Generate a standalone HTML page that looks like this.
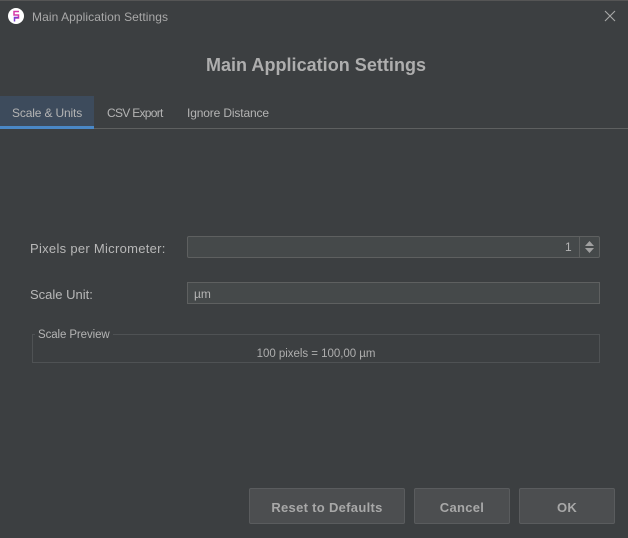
<!DOCTYPE html>
<html><head><meta charset="utf-8"><style>
html,body{margin:0;padding:0;background:#3c3f41}
body{width:628px;height:538px;position:relative;overflow:hidden;font-family:"Liberation Sans",sans-serif;color:#b4b4b4;font-size:12px}
.a{position:absolute;white-space:nowrap}
.b{position:absolute;box-sizing:border-box;border:1px solid #5e6060;background:#45494a}
.btn{position:absolute;top:488px;height:36px;box-sizing:border-box;background:#4c4e50;border:1px solid #5a5c5e;border-radius:2px;text-align:center;line-height:37px;font-weight:bold;font-size:13px;color:#a8a8a8;letter-spacing:.3px}
</style></head><body>
<div class="a" style="left:0;top:0;width:628px;height:1px;background:#555"></div>
<svg class="a" style="left:8px;top:8px" width="16" height="16" viewBox="0 0 16 16"><circle cx="8" cy="8" r="8" fill="#fff"/><path d="M11 3.500H6V7H10.500V10H6" fill="none" stroke="#d63aa8" stroke-width="1.500"/><path d="M6.500 13.500V9.500H10.500" fill="none" stroke="#7a3fd0" stroke-width="1.500"/></svg>
<div class="a" style="left:32px;top:10px;line-height:14px;color:#a9a9a9;letter-spacing:.08px">Main Application Settings</div>
<svg class="a" style="left:604px;top:10px" width="12" height="12" viewBox="0 0 12 12"><path d="M1 1L11 11M11 1L1 11" stroke="#a8a8a8" stroke-width="1.100"/></svg>
<div class="a" style="left:0;width:632px;top:54px;text-align:center;font-size:18px;line-height:22px;font-weight:bold;color:#aeaeae;letter-spacing:.03px">Main Application Settings</div>
<div class="a" style="left:0;top:96px;width:94px;height:30px;background:#3d4b5c"></div>
<div class="a" style="left:0;top:126px;width:94px;height:3px;background:#4a88c7"></div>
<div class="a" style="left:94px;top:128px;width:534px;height:1px;background:#5e6060"></div>
<div class="a" style="left:12px;top:106px;line-height:14px;color:#b4b4b4;letter-spacing:-.15px">Scale &amp; Units</div>
<div class="a" style="left:107px;top:106px;line-height:14px;letter-spacing:-.7px">CSV Export</div>
<div class="a" style="left:187px;top:106px;line-height:14px;letter-spacing:-.14px">Ignore Distance</div>
<div class="a" style="left:30px;top:241px;line-height:16px;font-size:13px;color:#b8b8b8;letter-spacing:.29px">Pixels per Micrometer:</div>
<div class="b" style="left:187px;top:236px;width:413px;height:22px;border-radius:2px"></div>
<div class="a" style="left:579px;top:237px;width:1px;height:20px;background:#5e6060"></div>
<div class="a" style="left:565px;top:240px;line-height:15px;color:#b4b4b4">1</div>
<svg class="a" style="left:585px;top:241px" width="9" height="12" viewBox="0 0 9 12"><path d="M4.500 0L9 5H0Z M0 7H9L4.500 12Z" fill="#a0a0a0"/></svg>
<div class="a" style="left:30px;top:287px;line-height:16px;font-size:13px;color:#b8b8b8">Scale Unit:</div>
<div class="b" style="left:187px;top:282px;width:413px;height:22px"></div>
<div class="a" style="left:194px;top:287px;line-height:15px">µm</div>
<div class="a" style="left:32px;top:334px;width:568px;height:29px;box-sizing:border-box;border:1px solid #4f5254"></div>
<div class="a" style="left:35px;top:328px;padding:0 3px;background:#3c3f41;line-height:14px;color:#b4b4b4;font-size:11.500px;letter-spacing:-.1px">Scale Preview</div>
<div class="a" style="left:32px;width:568px;top:347px;text-align:center;line-height:14px;color:#aeaeae;font-size:11.500px;letter-spacing:-.03px">100 pixels = 100,00 µm</div>
<div class="btn" style="left:249px;width:156px">Reset to Defaults</div>
<div class="btn" style="left:414px;width:96px">Cancel</div>
<div class="btn" style="left:519px;width:96px">OK</div>
</body></html>
